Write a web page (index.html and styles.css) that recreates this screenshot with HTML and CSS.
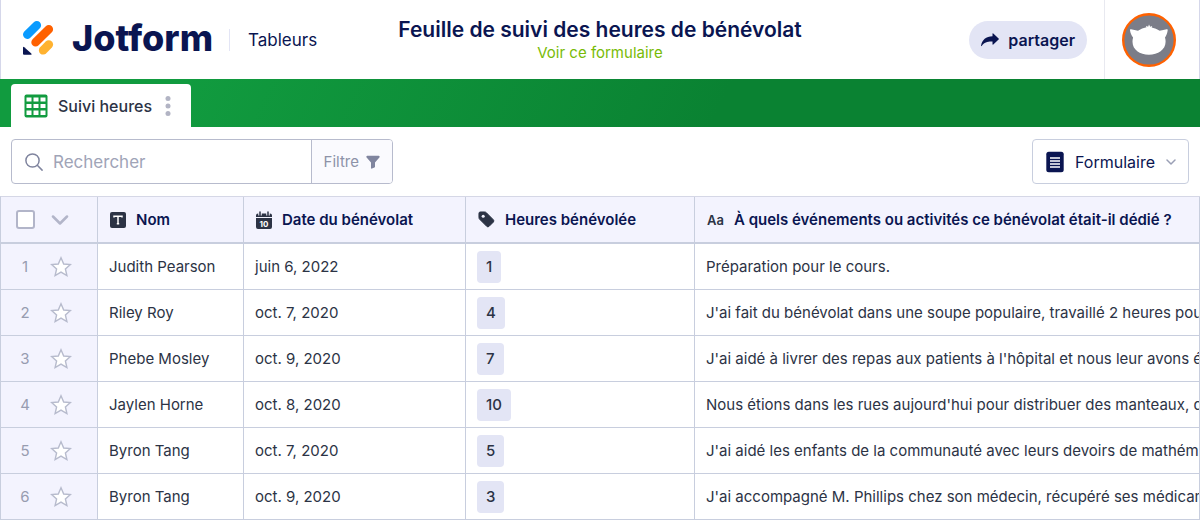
FILE: index.html
```html
<!DOCTYPE html>
<html lang="fr">

<head>
    <meta charset="UTF-8">
    <meta name="viewport" content="width=device-width, initial-scale=1.0">
    <title>Jotform Tableurs - Suivi des heures de bénévolat</title>
    <link rel="stylesheet" href="styles.css">
</head>

<body>
    <svg class="sprite" aria-hidden="true">
        <symbol id="star" viewBox="0 0 22 22">
            <path d="M11 1.800l2.700 6.200 6.700.6-5 4.400 1.500 6.600-5.900-3.500-5.900 3.500 1.500-6.600-5-4.400 6.700-.6z" fill="#fff" stroke="#b7bbcd" stroke-width="1.400"/>
        </symbol>
    </svg>

    <header class="topbar">
        <div class="brand">
            <a href="#" class="logo">
                <svg width="32" height="36" viewBox="0 0 32 36" aria-hidden="true">
                    <g stroke-width="8.600" stroke-linecap="round">
                        <path d="M5.300 14.600L14.800 5.300" stroke="#0a9bff"/>
                        <path d="M13.600 22.300L26.800 9.200" stroke="#ff6100"/>
                        <path d="M21.200 30.300L26.800 24.500" stroke="#ffb230"/>
                    </g>
                    <path d="M1 27.800q0-1.700 1.300-.6l7 6.300q1 1.200-.5 1.200H2Q1 34.700 1 33.700z" fill="#0a1551"/>
                </svg>
                <span>Jotform</span>
            </a>
            <span class="product">Tableurs</span>
        </div>
        <div class="heading">
            <h1>Feuille de suivi des heures de bénévolat</h1>
            <a href="#">Voir ce formulaire</a>
        </div>
        <div class="account">
            <button type="button" class="share">
                <svg width="18" height="14" viewBox="0 0 18 14" aria-hidden="true">
                    <path d="M11.500.8q0-1 .8-.4l5.300 5q.6.6 0 1.200l-5.300 4.800q-.8.6-.8-.4V8.500C7 8.300 3.300 9.100.7 13 .3 13.300 0 13.100.1 12.600 1 7 5 3.400 11.500 3.300z" fill="#0a1551"/>
                </svg>
                partager
            </button>
            <div class="user">
                <svg width="54" height="54" viewBox="0 0 54 54" role="img" aria-label="Mon compte">
                    <circle cx="27" cy="27" r="25.800" fill="#7b7d88" stroke="#ff6100" stroke-width="2.400"/>
                    <path d="M8 17.200q-.2-1.200 1-.9l7 1.400q4-2.800 8.500-3.400l-.6-1.600 2.200 1 .9-2.200 1.200 2.200 2-.8-.5 1.500q4.400.8 8 3.300l7-1.400q1.200-.3 1 .9c-.5 3-1.300 5.300-2.700 7.400.5 1.500.6 2.800.6 4.200 0 8-7.600 12.900-16.700 12.900S10.500 36.800 10.500 28.800c0-1.500.1-2.800.6-4.300C9.500 22.500 8.500 20.200 8 17.200z" fill="#fff"/>
                </svg>
            </div>
        </div>
    </header>

    <nav class="tabs">
        <div class="tab">
            <svg width="24" height="24" viewBox="0 0 24 24" aria-hidden="true">
                <rect x=".5" y=".5" width="23" height="23" rx="2" fill="#119b3f"/>
                <path d="M2.500 3.500h5v4h-5zM9.500 3.500h5v4h-5zM16.500 3.500h5v4h-5zM2.500 10h5v4h-5zM9.500 10h5v4h-5zM16.500 10h5v4h-5zM2.500 16.500h5v4.500h-5zM9.500 16.500h5v4.500h-5zM16.500 16.500h5v4.500h-5z" fill="#fff"/>
            </svg>
            <a href="#">Suivi heures</a>
            <button type="button" aria-label="Options de l'onglet">
                <svg width="6" height="20" viewBox="0 0 6 20">
                    <g fill="#b2b4c4"><circle cx="3" cy="2.500" r="2.500"/><circle cx="3" cy="10" r="2.500"/><circle cx="3" cy="17.500" r="2.500"/></g>
                </svg>
            </button>
        </div>
    </nav>

    <div class="toolbar">
        <div class="search">
            <label for="search" aria-label="Rechercher">
                <svg width="18" height="18" viewBox="0 0 18 18" fill="none" stroke="#80859f" stroke-width="1.500" stroke-linecap="round">
                    <circle cx="7.500" cy="7.500" r="6.600"/>
                    <path d="M12.300 12.300l4.800 4.800"/>
                </svg>
            </label>
            <input type="text" id="search" placeholder="Rechercher">
            <button type="button">
                Filtre
                <svg width="14" height="14" viewBox="0 0 14 14" aria-hidden="true">
                    <path d="M1.200.8h11.600q1.200.2.8 1.400L9 7.400v4.200q0 .5-.5.800L6 13.600q-1 .2-1-.7V7.400L.4 2.200Q0 1 1.200.8z" fill="#80859f"/>
                </svg>
            </button>
        </div>
        <button type="button" class="view">
            <svg width="18" height="22" viewBox="0 0 18 22" aria-hidden="true">
                <rect x=".3" y=".7" width="17.400" height="20.600" rx="2.500" fill="#0a1551"/>
                <path d="M4 7h10M4 10h10M4 13h10M4 16h10" stroke="#fff" stroke-width="1.500"/>
            </svg>
            Formulaire
            <svg width="10" height="6" viewBox="0 0 10 6" fill="none" aria-hidden="true">
                <path d="M1 1l4 4 4-4" stroke="#9a9fb5" stroke-width="1.500" stroke-linecap="round" stroke-linejoin="round"/>
            </svg>
        </button>
    </div>

    <table>
        <colgroup>
            <col class="col-row">
            <col class="col-name">
            <col class="col-date">
            <col class="col-hours">
            <col>
        </colgroup>
        <thead>
            <tr>
                <th class="row-head">
                    <div class="cell">
                        <input type="checkbox" aria-label="Tout sélectionner">
                        <svg width="18" height="10" viewBox="0 0 18 10" fill="none" aria-hidden="true">
                            <path d="M2 1.500l7 7 7-7" stroke="#b2b5c9" stroke-width="2.500" stroke-linecap="round" stroke-linejoin="round"/>
                        </svg>
                    </div>
                </th>
                <th>
                    <div class="cell">
                        <svg width="16" height="16" viewBox="0 0 16 16" aria-hidden="true">
                            <rect width="16" height="16" rx="2" fill="#2c3345"/>
                            <path d="M4 5.500V4.200h8v1.300M8 4.200v7.600M6.800 11.800h2.400" fill="none" stroke="#fff" stroke-width="1.500"/>
                        </svg>
                        Nom
                    </div>
                </th>
                <th>
                    <div class="cell">
                        <svg width="16" height="18" viewBox="0 0 16 18" aria-hidden="true">
                            <path d="M2 2.500h12q2 0 2 2V6H0V4.500q0-2 2-2zM0 7h16v9q0 2-2 2H2q-2 0-2-2z" fill="#2c3345"/>
                            <path d="M4 .5v4M12 .5v4" stroke="#f3f3fe" stroke-width="3.500"/>
                            <path d="M4 1v3.500M12 1v3.500" stroke="#2c3345" stroke-width="1.500" stroke-linecap="round"/>
                            <text x="8" y="15.500" text-anchor="middle" class="day">10</text>
                        </svg>
                        Date du bénévolat
                    </div>
                </th>
                <th>
                    <div class="cell">
                        <svg width="17" height="17" viewBox="0 0 18 18" aria-hidden="true">
                            <path d="M2.500 1H7q1 0 1.700.7l7.500 7.500q1.300 1.300 0 2.600l-4.400 4.400q-1.300 1.300-2.600 0L1.700 8.700Q1 8 1 7V2.500Q1 1 2.500 1z" fill="#2c3345" stroke="#2c3345"/>
                            <circle cx="5.500" cy="5.500" r="1.600" fill="#f3f3fe"/>
                        </svg>
                        Heures bénévolée
                    </div>
                </th>
                <th>
                    <div class="cell"><span class="type-text">Aa</span>À quels événements ou activités ce bénévolat était-il dédié ?</div>
                </th>
            </tr>
        </thead>
        <tbody>
            <tr>
                <td class="row-head"><div class="cell"><span class="num">1</span><button type="button" aria-label="Favori"><svg width="22" height="22"><use href="#star"/></svg></button></div></td>
                <td>Judith Pearson</td>
                <td>juin 6, 2022</td>
                <td><span class="tag">1</span></td>
                <td>Préparation pour le cours.</td>
            </tr>
            <tr>
                <td class="row-head"><div class="cell"><span class="num">2</span><button type="button" aria-label="Favori"><svg width="22" height="22"><use href="#star"/></svg></button></div></td>
                <td>Riley Roy</td>
                <td>oct. 7, 2020</td>
                <td><span class="tag">4</span></td>
                <td>J'ai fait du bénévolat dans une soupe populaire, travaillé 2 heures pou</td>
            </tr>
            <tr>
                <td class="row-head"><div class="cell"><span class="num">3</span><button type="button" aria-label="Favori"><svg width="22" height="22"><use href="#star"/></svg></button></div></td>
                <td>Phebe Mosley</td>
                <td>oct. 9, 2020</td>
                <td><span class="tag">7</span></td>
                <td>J'ai aidé à livrer des repas aux patients à l'hôpital et nous leur avons ég</td>
            </tr>
            <tr>
                <td class="row-head"><div class="cell"><span class="num">4</span><button type="button" aria-label="Favori"><svg width="22" height="22"><use href="#star"/></svg></button></div></td>
                <td>Jaylen Horne</td>
                <td>oct. 8, 2020</td>
                <td><span class="tag">10</span></td>
                <td>Nous étions dans les rues aujourd'hui pour distribuer des manteaux, de</td>
            </tr>
            <tr>
                <td class="row-head"><div class="cell"><span class="num">5</span><button type="button" aria-label="Favori"><svg width="22" height="22"><use href="#star"/></svg></button></div></td>
                <td>Byron Tang</td>
                <td>oct. 7, 2020</td>
                <td><span class="tag">5</span></td>
                <td>J'ai aidé les enfants de la communauté avec leurs devoirs de mathéma</td>
            </tr>
            <tr>
                <td class="row-head"><div class="cell"><span class="num">6</span><button type="button" aria-label="Favori"><svg width="22" height="22"><use href="#star"/></svg></button></div></td>
                <td>Byron Tang</td>
                <td>oct. 9, 2020</td>
                <td><span class="tag">3</span></td>
                <td>J'ai accompagné M. Phillips chez son médecin, récupéré ses médicam</td>
            </tr>
        </tbody>
    </table>
</body>

</html>
```
FILE: styles.css
```css
* {
    box-sizing: border-box;
}

body {
    margin: 0;
    font-family: Inter, "Liberation Sans", sans-serif;
    font-size: 15px;
    color: #2c3345;
    background: #fff;
}

button, input {
    font: inherit;
    color: inherit;
}

button {
    border: none;
    background: none;
    padding: 0;
    cursor: pointer;
}

a {
    color: inherit;
    text-decoration: none;
}

svg {
    display: block;
    flex: none;
}

.sprite {
    display: none;
}

/* top bar */
.topbar {
    display: grid;
    grid-template-columns: 1fr auto 1fr;
    height: 79px;
    border-left: 1px solid #d5d7ea;
    border-right: 1px solid #d5d7ea;
    color: #0a1551;
}

.brand {
    display: flex;
    align-items: center;
    padding: 0 0 4px 21px;
}

.logo {
    display: flex;
    align-items: center;
    gap: 18px;
    font-size: 36px;
    line-height: 36px;
    font-weight: 800;
}

.product {
    margin: 4px 0 0 16px;
    padding-left: 18px;
    border-left: 1px solid #e3e5f5;
    font-size: 17px;
    line-height: 22px;
}

.heading {
    text-align: center;
    padding-top: 17px;
}

.heading h1 {
    margin: 0;
    font-size: 21px;
    line-height: 26px;
    font-weight: 600;
}

.heading a {
    display: block;
    line-height: 20px;
    color: #78bb07;
}

.account {
    display: flex;
    align-items: center;
    justify-content: flex-end;
    gap: 17px;
}

.share {
    display: flex;
    align-items: center;
    gap: 9px;
    height: 38px;
    padding: 0 12px;
    border-radius: 19px;
    background: #e3e5f5;
    font-size: 16px;
    font-weight: 600;
}

.user {
    display: flex;
    align-items: center;
    height: 100%;
    padding: 0 23px 0 17px;
    border-left: 1px solid #e8e9f0;
}

/* sheet tabs */
.tabs {
    display: flex;
    align-items: flex-end;
    height: 48px;
    padding-left: 11px;
    background: linear-gradient(115deg, #119b3f 15%, #0a8232 60%);
}

.tab {
    display: flex;
    align-items: center;
    gap: 10px;
    width: 180px;
    height: 43px;
    padding-left: 13px;
    border-radius: 4px 4px 0 0;
    background: #fff;
    font-size: 16px;
    font-weight: 500;
}

.tab button {
    padding: 0 3px;
}

/* search and view buttons */
.toolbar {
    display: flex;
    align-items: center;
    justify-content: space-between;
    height: 69px;
    padding: 0 11px;
}

.search {
    display: flex;
    align-items: center;
    width: 382px;
    height: 45px;
    border: 1px solid #b7bbcd;
    border-radius: 4px;
    overflow: hidden;
}

.search label {
    padding: 0 10px 0 13px;
}

.search input {
    flex: 1;
    min-width: 0;
    height: 100%;
    padding: 0;
    border: none;
    outline: none;
    font-size: 17px;
}

.search input::placeholder {
    color: #a0a4b7;
}

.search button {
    display: flex;
    align-items: center;
    gap: 7px;
    height: 100%;
    padding: 0 12px;
    border-left: 1px solid #b7bbcd;
    background: #fafafe;
    color: #8d92a8;
}

.view {
    display: flex;
    align-items: center;
    gap: 11px;
    height: 45px;
    padding: 0 12px 0 13px;
    border: 1px solid #c8cede;
    border-radius: 4px;
    color: #0a1551;
    font-size: 16px;
}

/* table */
table {
    width: 100%;
    table-layout: fixed;
    border-spacing: 0;
    border-top: 1px solid #d5d7e6;
    border-left: 1px solid #c8cede;
}

.col-row {
    width: 97px;
}

.col-name {
    width: 146px;
}

.col-date {
    width: 222px;
}

.col-hours {
    width: 229px;
}

th, td {
    height: 46px;
    padding: 0 11px;
    border-right: 1px solid #c8cede;
    border-bottom: 1px solid #c8cede;
    text-align: left;
    white-space: nowrap;
    overflow: hidden;
}

th {
    height: 47px;
    padding: 0 12px;
    border-bottom-width: 2px;
    background: #f3f3fe;
    color: #0a1551;
    font-weight: 600;
}

td:last-child {
    padding-right: 0;
}

.cell {
    display: flex;
    align-items: center;
    gap: 10px;
}

.row-head {
    padding: 0 16px 0 15px;
    background: #f3f3fe;
}

.row-head .cell {
    gap: 16px;
}

.row-head input {
    appearance: none;
    width: 19px;
    height: 19px;
    margin: 0;
    border: 2px solid #b2b5c9;
    border-radius: 3px;
    background: #fff;
}

.num {
    width: 18px;
    text-align: center;
    color: #979cb0;
}

.type-text {
    color: #2c3345;
    font-size: 13px;
}

.day {
    font-size: 8px;
    font-weight: 700;
    fill: #fff;
}

.tag {
    display: inline-block;
    padding: 0 9px;
    border-radius: 4px;
    background: #e3e5f5;
    line-height: 32px;
    font-weight: 500;
}
```
